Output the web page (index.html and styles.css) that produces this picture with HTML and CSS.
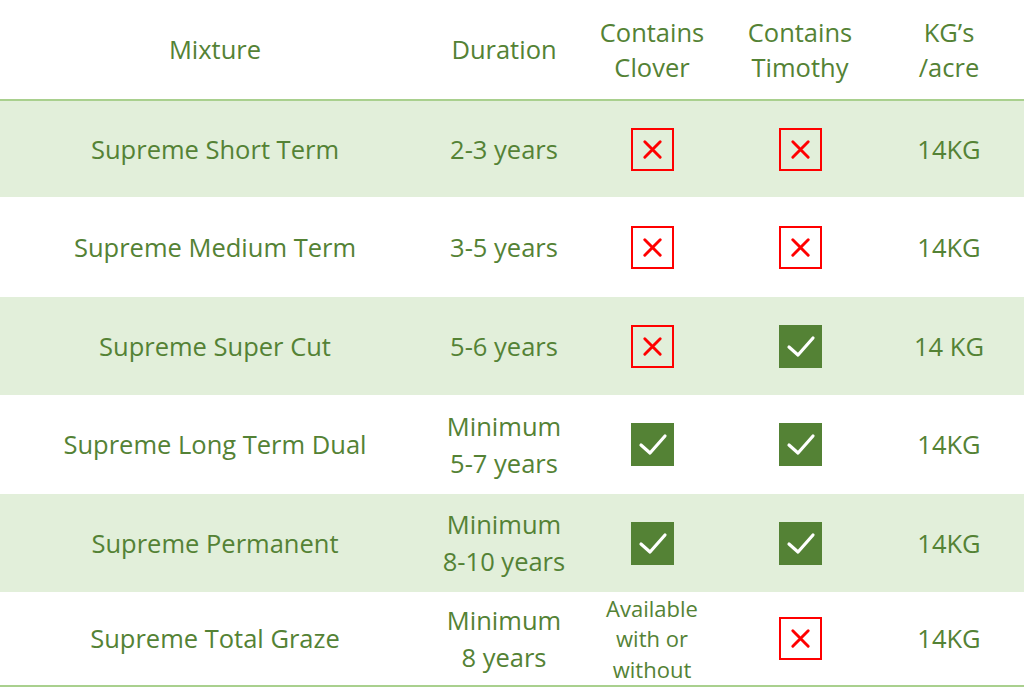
FILE: index.html
```html
<!DOCTYPE html>
<html>
<head>
<meta charset="utf-8">
<link rel="stylesheet" href="styles.css">
</head>
<body>
<table class="grid">
  <colgroup>
    <col class="c-mix"><col class="c-dur"><col class="c-clo"><col class="c-tim"><col class="c-kg">
  </colgroup>
  <thead>
    <tr class="head">
      <th>Mixture</th>
      <th>Duration</th>
      <th>Contains<br>Clover</th>
      <th>Contains<br>Timothy</th>
      <th>KG’s<br>/acre</th>
    </tr>
  </thead>
  <tbody>
    <tr class="row r1 shade">
      <td>Supreme Short Term</td>
      <td>2-3 years</td>
      <td><span class="mark no"><svg viewBox="0 0 43 43"><path d="M13 13 L30 30 M30 13 L13 30"/></svg></span></td>
      <td><span class="mark no"><svg viewBox="0 0 43 43"><path d="M13 13 L30 30 M30 13 L13 30"/></svg></span></td>
      <td>14KG</td>
    </tr>
    <tr class="row r2">
      <td>Supreme Medium Term</td>
      <td>3-5 years</td>
      <td><span class="mark no"><svg viewBox="0 0 43 43"><path d="M13 13 L30 30 M30 13 L13 30"/></svg></span></td>
      <td><span class="mark no"><svg viewBox="0 0 43 43"><path d="M13 13 L30 30 M30 13 L13 30"/></svg></span></td>
      <td>14KG</td>
    </tr>
    <tr class="row r3 shade">
      <td>Supreme Super Cut</td>
      <td>5-6 years</td>
      <td><span class="mark no"><svg viewBox="0 0 43 43"><path d="M13 13 L30 30 M30 13 L13 30"/></svg></span></td>
      <td><span class="mark yes"><svg viewBox="0 0 43 43"><path d="M10 22 L19 30 L34 13"/></svg></span></td>
      <td>14 KG</td>
    </tr>
    <tr class="row r4">
      <td>Supreme Long Term Dual</td>
      <td>Minimum<br>5-7 years</td>
      <td><span class="mark yes"><svg viewBox="0 0 43 43"><path d="M10 22 L19 30 L34 13"/></svg></span></td>
      <td><span class="mark yes"><svg viewBox="0 0 43 43"><path d="M10 22 L19 30 L34 13"/></svg></span></td>
      <td>14KG</td>
    </tr>
    <tr class="row r5 shade">
      <td>Supreme Permanent</td>
      <td>Minimum<br>8-10 years</td>
      <td><span class="mark yes"><svg viewBox="0 0 43 43"><path d="M10 22 L19 30 L34 13"/></svg></span></td>
      <td><span class="mark yes"><svg viewBox="0 0 43 43"><path d="M10 22 L19 30 L34 13"/></svg></span></td>
      <td>14KG</td>
    </tr>
    <tr class="row r6">
      <td>Supreme Total Graze</td>
      <td>Minimum<br>8 years</td>
      <td class="small">Available<br>with or<br>without</td>
      <td><span class="mark no"><svg viewBox="0 0 43 43"><path d="M13 13 L30 30 M30 13 L13 30"/></svg></span></td>
      <td>14KG</td>
    </tr>
  </tbody>
</table>
</body>
</html>
```
FILE: styles.css
```css
html, body {
  margin: 0;
  padding: 0;
  background: #ffffff;
}
body {
  width: 1024px;
  height: 697px;
  overflow: hidden;
  font-family: "Open Sans", Lato, sans-serif;
  color: #548235;
}
.grid {
  width: 1024px;
  border-collapse: collapse;
  table-layout: fixed;
}
.c-mix { width: 430px; }
.c-dur { width: 148px; }
.c-clo { width: 148px; }
.c-tim { width: 148px; }
.c-kg { width: 150px; }

.head th {
  height: 99px;
  padding: 0;
  font-weight: normal;
  font-size: 25.5px;
  line-height: 35px;
  text-align: center;
  vertical-align: middle;
  border-bottom: 2px solid #a9d08e;
}
.row td {
  padding: 0;
  text-align: center;
  vertical-align: middle;
  font-size: 25.5px;
  line-height: 37px;
}
.row.shade td { background: #e2efda; }
.r1 td { height: 96px; }
.r2 td { height: 100px; }
.r3 td { height: 98px; }
.r4 td { height: 99px; }
.r5 td { height: 98px; }
.r6 td { height: 93px; border-bottom: 2px solid #a9d08e; }
.row td.small {
  font-size: 22px;
  line-height: 30.5px;
}

.mark {
  display: inline-block;
  width: 43px;
  height: 43px;
  vertical-align: middle;
  box-sizing: border-box;
}
.mark svg {
  display: block;
  width: 100%;
  height: 100%;
}
.mark.no svg {
  border: 2px solid #ff0000;
  box-sizing: border-box;
}
.mark.no path {
  stroke: #ff0000;
  stroke-width: 3.2;
  stroke-linecap: round;
  fill: none;
}
.mark.yes {
  background: #548235;
}
.mark.yes path {
  stroke: #ffffff;
  stroke-width: 3.2;
  stroke-linecap: round;
  stroke-linejoin: round;
  fill: none;
}
```
